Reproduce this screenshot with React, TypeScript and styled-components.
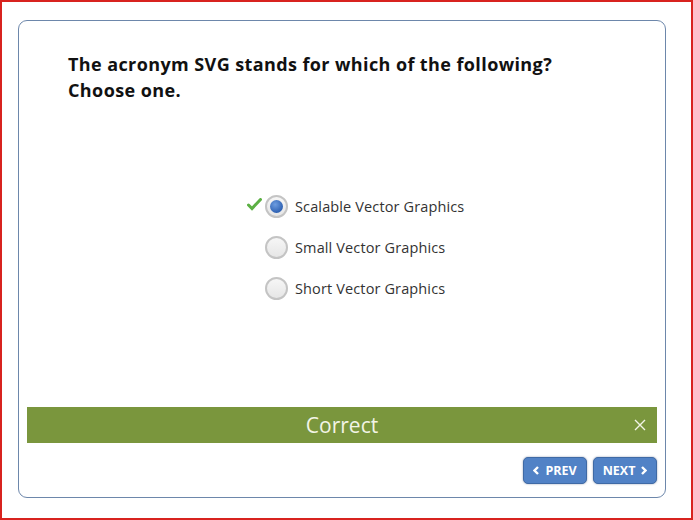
import React from "react";
import styled, { createGlobalStyle } from "styled-components";

const Global = createGlobalStyle`
  html, body { margin: 0; padding: 0; background: #fff; }
  * { box-sizing: border-box; }
  body { font-family: "Open Sans", "Liberation Sans", sans-serif; }
`;

const Page = styled.div`
  width: 693px;
  height: 520px;
  border: 2px solid #d8231f;
  padding: 18px 25px 20px 16px;
  background: #fff;
`;

const Card = styled.div`
  width: 648px;
  height: 478px;
  border: 1px solid #6d87ab;
  border-radius: 9px;
  display: flex;
  flex-direction: column;
  padding: 0 8px 13px 8px;
`;

const Title = styled.h1`
  margin: 30px 0 0 41px;
  font-size: 18px;
  line-height: 26px;
  font-weight: 700;
  letter-spacing: 0.4px;
  color: #111;
`;

const Options = styled.div`
  margin: 83px 0 0 238px;
  display: flex;
  flex-direction: column;
`;

const Row = styled.label`
  position: relative;
  height: 41px;
  display: flex;
  align-items: center;
  gap: 7px;
  font-size: 14.5px;
  letter-spacing: 0.13px;
  color: #333;
`;

const Radio = styled.span<{ $on?: boolean }>`
  width: 23px;
  height: 23px;
  border-radius: 50%;
  border: 2px solid #c4c4c4;
  background: linear-gradient(#f6f6f6, #e6e6e6);
  display: flex;
  align-items: center;
  justify-content: center;
  &::after {
    content: "";
    display: ${(p) => (p.$on ? "block" : "none")};
    width: 13px;
    height: 13px;
    border-radius: 50%;
    background: radial-gradient(circle at 40% 35%, #6d9de0, #2f62b3 70%);
  }
`;

const Check = styled.svg`
  position: absolute;
  left: -18px;
  top: 12px;
`;

const Bar = styled.div`
  margin-top: auto;
  height: 36px;
  background: #7a963d;
  position: relative;
  display: flex;
  align-items: center;
  justify-content: center;
  color: #f2f4e6;
  font-size: 21px;
  padding-bottom: 1px;
`;

const Close = styled.svg`
  position: absolute;
  right: 11px;
  top: 12px;
`;

const Footer = styled.div`
  margin-top: 14px;
  display: flex;
  justify-content: flex-end;
  gap: 6px;
`;

const NavButton = styled.button`
  width: 64px;
  height: 27px;
  border: 1px solid #3f6aa5;
  border-radius: 5px;
  background: #5182c6;
  box-shadow: 0 0 2px rgba(60, 80, 120, 0.6);
  color: #fff;
  font-family: "Open Sans", "Liberation Sans", sans-serif;
  font-weight: 700;
  font-size: 12.5px;
  display: flex;
  align-items: center;
  justify-content: center;
  gap: 6px;
  padding: 0;
`;

const Chevron = ({ left }: { left?: boolean }) => (
  <svg width="6" height="9" viewBox="0 0 6 9">
    <path
      d={left ? "M5 1 L1.5 4.5 L5 8" : "M1 1 L4.5 4.5 L1 8"}
      stroke="#fff"
      strokeWidth="2.4"
      fill="none"
    />
  </svg>
);

const options = [
  { label: "Scalable Vector Graphics", on: true },
  { label: "Small Vector Graphics", on: false },
  { label: "Short Vector Graphics", on: false },
];

export default function App() {
  return (
    <>
      <Global />
      <Page>
        <Card>
          <Title>
            The acronym SVG stands for which of the following?
            <br />
            Choose one.
          </Title>
          <Options>
            {options.map((o) => (
              <Row key={o.label}>
                {o.on && (
                  <Check width="15" height="13" viewBox="0 0 15 13">
                    <path
                      d="M1.5 7 L5 10.5 L13.5 1.5"
                      stroke="#5cb044"
                      strokeWidth="3"
                      fill="none"
                      strokeLinecap="round"
                    />
                  </Check>
                )}
                <Radio $on={o.on} />
                {o.label}
              </Row>
            ))}
          </Options>
          <Bar>
            Correct
            <Close width="12" height="12" viewBox="0 0 12 12">
              <path d="M1 1 L11 11 M11 1 L1 11" stroke="#f2f4e6" strokeWidth="1.4" />
            </Close>
          </Bar>
          <Footer>
            <NavButton>
              <Chevron left />
              PREV
            </NavButton>
            <NavButton>
              NEXT
              <Chevron />
            </NavButton>
          </Footer>
        </Card>
      </Page>
    </>
  );
}
